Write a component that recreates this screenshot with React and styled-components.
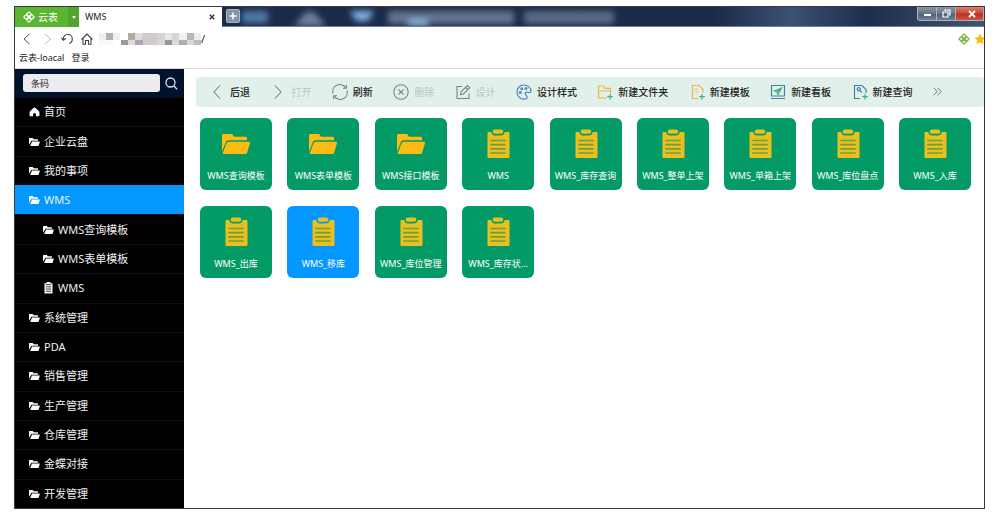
import React from "react";
import styled, { createGlobalStyle } from "styled-components";

const Global = createGlobalStyle`
  * { box-sizing: border-box; }
  body { margin: 0; background: #fff; font-family: "Noto Sans", "Noto Sans CJK SC", sans-serif; color: #222; }
  button, input { font: inherit; color: inherit; border: 0; padding: 0; margin: 0; background: none; }
  button { cursor: pointer; }
  ul { list-style: none; margin: 0; padding: 0; }
  svg { display: block; flex: none; }
`;

const Frame = styled.div`
  margin: 6px 15px 14px 14px;
  min-height: calc(100vh - 20px);
  border: 1px solid #3a3a3c;
  display: flex;
  flex-direction: column;
  overflow: hidden;
`;

const TitleBar = styled.header`
  height: 20px;
  display: flex;
  align-items: stretch;
  border-bottom: 1px solid #75808f;
  background: linear-gradient(90deg, #1b2b4a 0, #1a2a48 72%, #3b5273 80%, #1c2e4d 88%, #42546f 100%);
`;
const Brand = styled.button`
  height: 20px;
  display: flex;
  align-items: center;
  gap: 3px;
  padding: 0 10px 0 8px;
  background: #5cb531;
  color: #fff;
  font-size: 10px;
  line-height: 18px;
`;
const BrandMenu = styled.button`
  height: 20px;
  width: 11px;
  display: grid;
  place-items: center;
  background: #50a52b;
`;
const Tab = styled.div`
  height: 20px;
  width: 143px;
  padding: 0 7px 0 6px;
  display: flex;
  align-items: center;
  justify-content: space-between;
  background: #fff;
  font-size: 9px;
  line-height: 18px;
`;
const TabClose = styled.button`
  width: 6px;
  height: 10px;
  display: grid;
  place-items: center;
`;
const NewTab = styled.button`
  width: 14px;
  height: 14px;
  margin: 2px 0 0 4px;
  display: grid;
  place-items: center;
  background: #8493a8;
  border: 1px solid #aab4c2;
  border-radius: 2px;
`;
const Backdrop = styled.div`
  flex: 1;
  overflow: hidden;
`;
const WindowButtons = styled.div`
  display: flex;
  height: 14px;
  border: 1px solid #a9b2be;
  border-width: 0 0 1px 1px;
  border-radius: 0 0 0 3px;
  overflow: hidden;
`;
const WindowButton = styled.button`
  width: ${(p) => (p.$close ? 28 : 19)}px;
  padding-left: ${(p) => (p.$close ? 5 : 0)}px;
  display: grid;
  place-items: center;
  border-right: 1px solid #a9b2be;
  background: ${(p) =>
    p.$close
      ? "linear-gradient(#d9806f 0, #c8412b 50%, #b52e1b 51%, #cf5540 100%)"
      : "linear-gradient(#8a95a6 0, #65748a 50%, #4c5c75 51%, #708096 100%)"};
`;

const AddressBar = styled.div`
  height: 23px;
  display: flex;
  align-items: center;
  padding-left: 2px;
`;
const NavButton = styled.button`
  width: 20px;
  height: 20px;
  display: grid;
  place-items: center;
`;
const Mosaic = styled.div`
  margin-left: 2px;
`;
const AddressInput = styled.input`
  flex: 1;
  min-width: 0;
  font-size: 11px;
  line-height: 16px;
  outline: none;
`;
const Bookmarks = styled.nav`
  height: 19px;
  display: flex;
  align-items: center;
  gap: 7px;
  padding: 0 4px 3px;
  border-bottom: 1px solid #dcdcdc;
  a { color: #222; font-size: 9px; line-height: 14px; text-decoration: none; }
`;

const Body = styled.div`
  flex: 1;
  display: flex;
`;
const Sidebar = styled.aside`
  width: 169px;
  flex: none;
  display: flex;
  flex-direction: column;
  background: #000;
`;
const Search = styled.form`
  display: flex;
  align-items: center;
  gap: 5px;
  height: 28px;
  padding: 0 6px 0 8px;
  background: #01132c;
`;
const SearchInput = styled.input`
  flex: 1;
  min-width: 0;
  height: 18px;
  padding: 0 8px;
  border-radius: 3px;
  background: #ecebf0;
  font-size: 9px;
  outline: none;
`;
const Menu = styled.ul`
  flex: 1;
  display: flex;
  flex-direction: column;
`;
const MenuItem = styled.li`
  flex: 1;
  min-height: 29px;
  display: flex;
  border-top: 1px solid ${(p) => (p.$active ? "#0497ff" : "#0b1118")};
  background: ${(p) => (p.$active ? "#0497ff" : "#000")};
`;
const MenuLink = styled.a`
  flex: 1;
  display: flex;
  align-items: center;
  gap: 4px;
  padding-left: ${(p) => (p.$nested ? 28 : 14)}px;
  color: #f0f0f0;
  font-size: 11px;
  line-height: 16px;
  text-decoration: none;
`;

const Main = styled.main`
  flex: 1;
  min-width: 0;
  padding-top: 8px;
`;
const Toolbar = styled.div`
  margin-left: 12px;
  height: 30px;
  padding: 0 42px 1px 13px;
  display: flex;
  align-items: center;
  justify-content: space-between;
  background: #e1f0ea;
  border-radius: 3px;
  overflow: hidden;
`;
const ToolButton = styled.button`
  display: flex;
  align-items: center;
  gap: 5px;
  flex: none;
  font-size: 10px;
  line-height: 16px;
  font-weight: 500;
  color: #222;
  &:disabled { color: #bcc5c1; cursor: default; font-weight: 400; }
`;
const Tiles = styled.div`
  padding: 11px 13px 16px 16px;
  display: grid;
  grid-template-columns: repeat(auto-fill, 72px);
  justify-content: space-between;
  column-gap: 15px;
  row-gap: 16px;
`;
const Tile = styled.button`
  height: 72px;
  padding: 10px 4px 6px;
  display: flex;
  flex-direction: column;
  align-items: center;
  justify-content: space-between;
  border-radius: 6px;
  color: #fff;
  font-size: 9px;
  line-height: 16px;
  white-space: nowrap;
  background: ${(p) => (p.$active ? "#0497ff" : "#049a65")};
`;

const Logo = ({ color = "#fff", fill = "none" }) => (
  <svg width="12" height="12" viewBox="0 0 12 12" fill={fill} stroke={color} strokeWidth="1.1">
    <path d="M6 .8 8.4 3.2 6 5.600 3.600 3.200zM6 6.400 8.400 8.800 6 11.200 3.600 8.800zM3.200 3.600 5.600 6 3.200 8.400.8 6zM8.800 3.600 11.200 6 8.800 8.400 6.400 6z" />
  </svg>
);

const Stroke = ({ color = "#7d8582", width = 1.1, children }) => (
  <svg width="16" height="16" viewBox="0 0 16 16" fill="none" stroke={color} strokeWidth={width}>
    {children}
  </svg>
);

const FolderMini = () => (
  <svg width="11" height="10" viewBox="0 0 11 10" fill="#fff">
    <path d="M0 1.500Q0 1 .5 1h3.300l1 1.200h3.700q.5 0 .5.5v1H2.500L.9 6.200 0 8z" />
    <path d="M3 4.400h7.500q.5 0 .3.500L9.700 8.500q-.1.500-.7.500H1.200z" />
  </svg>
);
const HomeMini = () => (
  <svg width="11" height="10" viewBox="0 0 11 10" fill="#fff">
    <path d="M5.500.5q.4 0 .8.300L10 4.200q.4.400.4 1V8.500q0 .8-.8.8H7V7.500a1.500 1.500 0 0 0-3 0v1.800H1.400q-.8 0-.8-.8V5.200q0-.6.4-1L4.700.8q.4-.3.8-.3z" />
  </svg>
);
const ClipMini = () => (
  <svg width="11" height="12" viewBox="0 0 11 12">
    <path fill="#eee" d="M3.500 0h4v1.300h2v10.200h-8V1.300h2z" />
    <path stroke="#222" strokeWidth=".8" d="M3 2.600h5M3 4.800h5M3 7h5M3 9.200h5" />
  </svg>
);
const menuIcons = { home: HomeMini, folder: FolderMini, clip: ClipMini };

const FolderBig = () => (
  <svg width="30" height="30" viewBox="0 0 30 30" fill="#fcbc14">
    <path d="M1 23.500V7.300q0-1.300 1.200-1.300h8.300q1 0 1.500 1l.8 1.700h11.700q1.500 0 1.500 1.300v2.200H7.500q-1.800 0-2.500 1.500z" />
    <path d="M7.800 13.800H27.800q1.600 0 1.200 1.400L26.200 24.500q-.4 1.500-2 1.500H2.600q-1.200 0-.7-1.300L5.500 15.300q.7-1.500 2.300-1.500z" />
  </svg>
);
const ClipBig = () => (
  <svg width="24" height="31" viewBox="0 0 24 31">
    <path fill="#e9c020" d="M1.500 4h3.800q.7 3.500 3.700 3.500h6q3 0 3.700-3.500h3.800q1 0 1 1v24q0 1-1 1h-20q-1 0-1-1V5q0-1 1-1z" />
    <rect x="6.800" y="1.500" width="10.400" height="4.300" rx="1.800" fill="#e9c020" />
    <path stroke="#6f9f38" strokeWidth="1.700" strokeLinecap="round" d="M5 12.500h14M5 16.700h14M5 20.800h14M5 25h14" />
  </svg>
);

const toolIcons = {
  back: <Stroke><path d="M11 1.500 5 8l6 6.500" /></Stroke>,
  forward: <Stroke><path d="m5 1.500 6 6.500-6 6.500" /></Stroke>,
  refresh: (
    <Stroke>
      <path d="M1 9.500A7 7 0 0 1 13.500 3.600M14.300.8v3.400h-3.400M15 6.500A7 7 0 0 1 2.500 12.400M1.700 15.200v-3.400h3.400" />
    </Stroke>
  ),
  remove: <Stroke><circle cx="8" cy="8" r="7.200" /><path d="m5.500 5.500 5 5M10.500 5.500l-5 5" /></Stroke>,
  edit: (
    <Stroke>
      <path d="M7 2.500H2v12h12V9.500M5.500 10.500l.7-3L12.500 1.500l2.200 2.200L8.500 10zM10.500 3.500l2.200 2.200" />
    </Stroke>
  ),
  palette: (
    <Stroke color="#4a86b8" width="1.200">
      <path d="M9.500 15C4.500 15.800 1 12.300 1 8.200 1 4 4 1 8 1s7 3 7 6c0 1.500-1.500 2-3.500 1.200-1.800-.6-3 .8-1.700 2.500 1 1.500 2.500 3.500-.3 4.300z" />
      <circle cx="4.300" cy="8.500" r=".9" /><circle cx="5.800" cy="4.800" r=".9" /><circle cx="10" cy="4.400" r=".9" />
    </Stroke>
  ),
  folder: (
    <Stroke color="#efb83c" width="1.200">
      <path d="M9.500 14H1.500V2h5l1.500 2.300h5.500V9.500M1.500 7h12" />
      <path stroke="#3fb083" d="M13 10v5.500M10.300 12.700h5.500" />
    </Stroke>
  ),
  template: (
    <Stroke color="#efb83c" width="1.200">
      <path d="M9 14.500H3.500V1.500h6.500l4 4V9M6 5h2.500M6 8h3.500" />
      <path stroke="#3fb083" d="M13 10v5.500M10.300 12.700h5.500" />
    </Stroke>
  ),
  board: (
    <Stroke color="#4a7fa8" width="1.200">
      <path d="M1.500 1.500h13v10.500h-13zM1 14.500h14" />
      <path stroke="#3fb083" d="M11.500 4 4.500 7l2.500 1 1 2.500zM7 8l4.500-4" />
    </Stroke>
  ),
  query: (
    <Stroke color="#4a7fa8" width="1.200">
      <path d="M8 14.500H2.500V1.500h7.500L14 5.500V9" />
      <circle cx="6.800" cy="5.300" r="1.600" /><path d="m8 6.600 2 2" />
      <path stroke="#3fb083" d="M13 10v5.500M10.300 12.700h5.500" />
    </Stroke>
  ),
};

const tools = [
  ["back", "后退"],
  ["forward", "打开", true],
  ["refresh", "刷新"],
  ["remove", "删除", true],
  ["edit", "设计", true],
  ["palette", "设计样式"],
  ["folder", "新建文件夹"],
  ["template", "新建模板"],
  ["board", "新建看板"],
  ["query", "新建查询"],
];

const menu = [
  { icon: "home", label: "首页" },
  { icon: "folder", label: "企业云盘" },
  { icon: "folder", label: "我的事项" },
  { icon: "folder", label: "WMS", active: true },
  { icon: "folder", label: "WMS查询模板", nested: true },
  { icon: "folder", label: "WMS表单模板", nested: true },
  { icon: "clip", label: "WMS", nested: true },
  { icon: "folder", label: "系统管理" },
  { icon: "folder", label: "PDA" },
  { icon: "folder", label: "销售管理" },
  { icon: "folder", label: "生产管理" },
  { icon: "folder", label: "仓库管理" },
  { icon: "folder", label: "金蝶对接" },
  { icon: "folder", label: "开发管理" },
];

const tiles = [
  ["WMS查询模板", "folder"],
  ["WMS表单模板", "folder"],
  ["WMS接口模板", "folder"],
  ["WMS"],
  ["WMS_库存查询"],
  ["WMS_整单上架"],
  ["WMS_单箱上架"],
  ["WMS_库位盘点"],
  ["WMS_入库"],
  ["WMS_出库"],
  ["WMS_移库"],
  ["WMS_库位管理"],
  ["WMS_库存状..."],
];

const blocks = [
  [0, 0, 7, "#f1f0f0"], [7, 0, 7, "#b9aeac"], [14, 0, 7, "#f0f0f0"], [29, 0, 7, "#b5aaa0"], [36, 0, 7, "#dcdcdc"],
  [43, 0, 15, "#cfcbcb"], [58, 0, 8, "#d9d4d2"], [66, 0, 7, "#e6e6e6"], [73, 0, 7, "#d3d7d9"], [80, 0, 8, "#f2f2f2"], [88, 0, 7, "#bdb6b6"], [95, 0, 7, "#eee"],
  [0, 7, 14, "#f8f8f8"], [22, 7, 7, "#9698a2"], [29, 7, 7, "#dcdcde"], [36, 7, 8, "#a9a9ad"], [44, 7, 14, "#cfcdcd"],
  [58, 7, 8, "#dcd6d4"], [66, 7, 7, "#8f98a5"], [73, 7, 7, "#dadadc"], [80, 7, 8, "#a9afb6"], [88, 7, 7, "#d8d8da"], [95, 7, 7, "#bdbdc0"],
];

export default function App() {
  return (
    <>
      <Global />
      <Frame>
        <TitleBar>
          <Brand><Logo />云表</Brand>
          <BrandMenu aria-label="菜单">
            <svg width="4" height="3" viewBox="0 0 4 3" fill="#fff"><path d="M0 0h4L2 3z" /></svg>
          </BrandMenu>
          <Tab>
            <span>WMS</span>
            <TabClose aria-label="关闭标签">
              <svg width="6" height="6" viewBox="0 0 6 6" stroke="#333" strokeWidth="1.400"><path d="m.8.8 4.400 4.400M5.200.8.8 5.200" /></svg>
            </TabClose>
          </Tab>
          <NewTab aria-label="新标签">
            <svg width="8" height="8" viewBox="0 0 8 8" stroke="#fff" strokeWidth="1.600"><path d="M4 .5v7M.5 4h7" /></svg>
          </NewTab>
          <Backdrop>
            <svg width="480" height="19" viewBox="0 0 480 19">
              <defs><filter id="soft" x="-20%" y="-60%" width="140%" height="220%"><feGaussianBlur stdDeviation="3" /></filter></defs>
              <g filter="url(#soft)">
                <rect x="2" y="4" width="26" height="12" fill="#4d79a8" />
                <path d="M66 5h8l12 14H54z" fill="#6d7f9d" />
                <path d="M110 4h24l-6 10h-12z" fill="#7fb2e6" />
                <rect x="148" y="4" width="126" height="13" fill="#62748f" />
                <rect x="284" y="4" width="90" height="13" fill="#566a87" />
                <rect x="168" y="13" width="20" height="6" fill="#8fbbe2" />
              </g>
            </svg>
          </Backdrop>
          <WindowButtons>
            <WindowButton aria-label="最小化">
              <svg width="9" height="9" viewBox="0 0 9 9"><path d="M1 5h7v2H1z" fill="#fff" /></svg>
            </WindowButton>
            <WindowButton aria-label="还原">
              <svg width="9" height="9" viewBox="0 0 9 9" fill="none" stroke="#fff" strokeWidth="1.200"><path d="M3 2V1h5v5H7M1 3h5v5H1z" /></svg>
            </WindowButton>
            <WindowButton $close aria-label="关闭">
              <svg width="8" height="8" viewBox="0 0 8 8" stroke="#fff" strokeWidth="1.800"><path d="m1 1 6 6M7 1 1 7" /></svg>
            </WindowButton>
          </WindowButtons>
        </TitleBar>

        <AddressBar>
          <NavButton aria-label="后退"><svg width="12" height="12" viewBox="0 0 12 12" fill="none" stroke="#555"><path d="M8.500 1 3 6l5.500 5" /></svg></NavButton>
          <NavButton aria-label="前进"><svg width="12" height="12" viewBox="0 0 12 12" fill="none" stroke="#bbb"><path d="m4 1 5.500 5L4 11" /></svg></NavButton>
          <NavButton aria-label="恢复"><svg width="12" height="12" viewBox="0 0 12 12" fill="none" stroke="#444" strokeWidth="1.100"><path d="M.3 4.800l2 2.500 2.500-2M2.300 7C2 3.500 4 1.500 6.800 1.500c2.700 0 4.500 2 4.500 4.300 0 2.500-1.300 4.200-3 4.700" /></svg></NavButton>
          <NavButton aria-label="主页"><svg width="12" height="12" viewBox="0 0 12 12" fill="none" stroke="#444" strokeWidth="1.100"><path d="M.6 6.500 6 1l5.400 5.500M2 5.500v5.800h2.500V7.500h3v3.800H10V5.500" /></svg></NavButton>
          <Mosaic>
            <svg width="102" height="12" viewBox="0 0 102 12">
              {blocks.map(([x, y, w, fill]) => <rect key={`${x}-${y}`} x={x} y={y} width={w} height={y ? 5 : 7} fill={fill} />)}
            </svg>
          </Mosaic>
          <AddressInput aria-label="地址" defaultValue="/" />
          <NavButton aria-label="云表"><Logo color="#7cb342" fill="#e5f3d8" /></NavButton>
          <svg width="10" height="12" viewBox="0 0 10 12" fill="#f9b90d"><path d="m6 .5 1.700 3.700 4 .4-3 2.700.9 4L6 9.300l-3.600 2 .9-4-3-2.700 4-.4z" /></svg>
        </AddressBar>
        <Bookmarks>
          <a href="#local">云表-loacal</a>
          <a href="#login">登录</a>
        </Bookmarks>

        <Body>
          <Sidebar>
            <Search onSubmit={(e) => e.preventDefault()}>
              <SearchInput aria-label="搜索" defaultValue="条码" />
              <button aria-label="搜索">
                <svg width="13" height="13" viewBox="0 0 13 13" fill="none" stroke="#dfe5ec" strokeWidth="1.300"><circle cx="5.500" cy="5.500" r="4.500" /><path d="m9 9 3 3.200" /></svg>
              </button>
            </Search>
            <Menu>
              {menu.map(({ icon, label, active, nested }, i) => {
                const Icon = menuIcons[icon];
                return (
                  <MenuItem key={i} $active={active}>
                    <MenuLink href="#menu" $nested={nested}><Icon />{label}</MenuLink>
                  </MenuItem>
                );
              })}
            </Menu>
          </Sidebar>
          <Main>
            <Toolbar>
              {tools.map(([icon, label, disabled]) => (
                <ToolButton key={label} disabled={disabled}>{toolIcons[icon]}{label}</ToolButton>
              ))}
              <ToolButton aria-label="更多">
                <svg width="9" height="9" viewBox="0 0 9 9" fill="none" stroke="#777"><path d="m.8.8 3.500 3.700L.8 8.200M4.800.8l3.500 3.700-3.500 3.700" /></svg>
              </ToolButton>
            </Toolbar>
            <Tiles>
              {tiles.map(([label, kind]) => (
                <Tile key={label} $active={label === "WMS_移库"}>
                  {kind === "folder" ? <FolderBig /> : <ClipBig />}
                  {label}
                </Tile>
              ))}
            </Tiles>
          </Main>
        </Body>
      </Frame>
    </>
  );
}
